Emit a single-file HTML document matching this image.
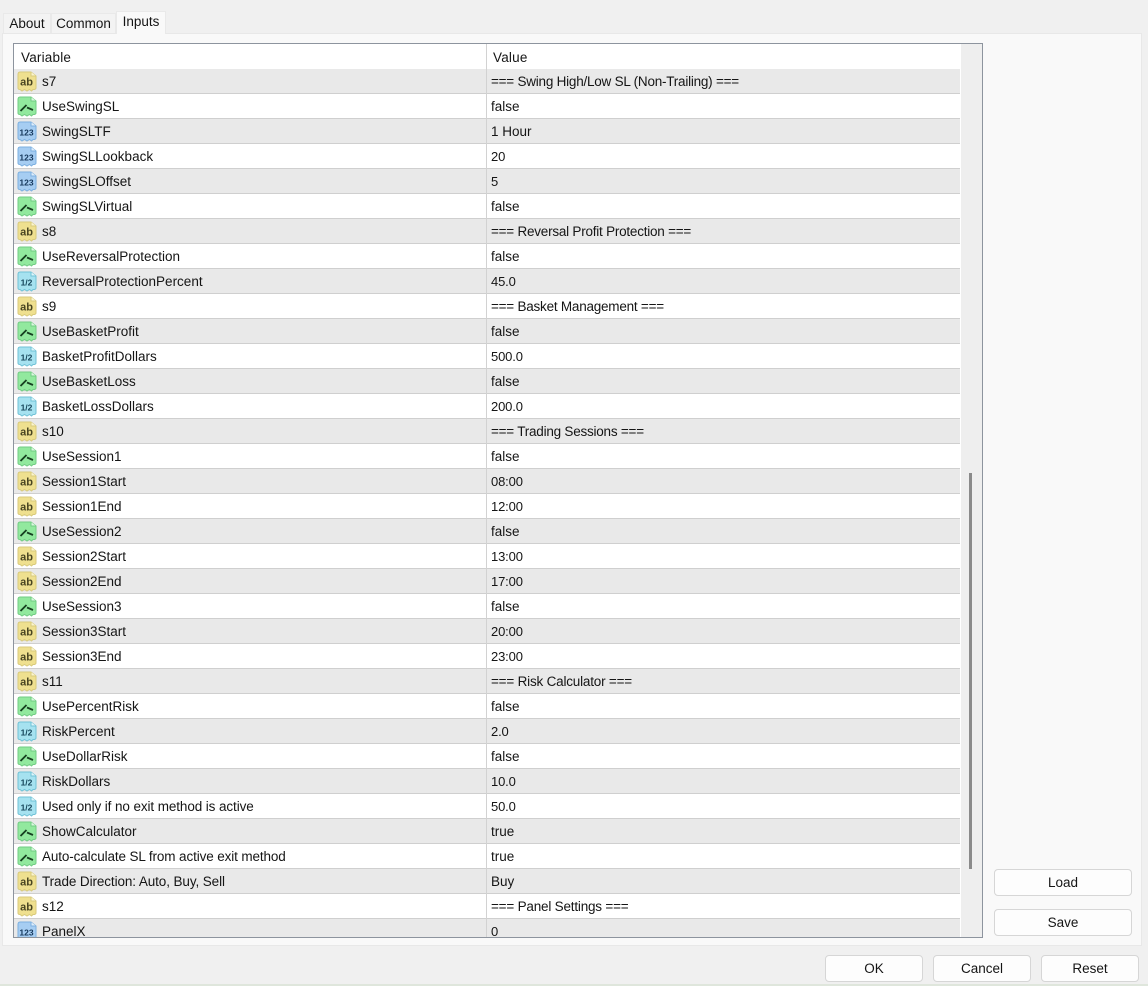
<!DOCTYPE html>
<html><head><meta charset="utf-8"><style>
html,body{margin:0;padding:0;width:1148px;height:986px;overflow:hidden;background:#f0f0f0;font-family:"Liberation Sans",sans-serif;font-size:13.5px;color:#151515}
.a{position:absolute;box-sizing:border-box}
.tab{position:absolute;box-sizing:border-box;text-align:center;background:#f3f3f3;border:1px solid #e9e9e9;border-bottom:0;height:20px;top:13px;line-height:20px}
#panel{left:2px;top:33px;width:1140px;height:913px;background:#f9f9f9;border:1px solid #e8e8e8}
#list{left:13px;top:43px;width:970px;height:895px;background:#fff;border:1px solid #8d949e;overflow:hidden}
#sb{position:absolute;left:947px;top:0;width:21px;height:893px;background:#eeeeee}
#th{position:absolute;left:955px;top:429px;width:3px;height:396px;background:#8a8a8a}
.h{position:absolute;top:6px;line-height:15px;letter-spacing:.2px}
.r{position:absolute;left:0;width:946px;height:25px;background:#fff;border-bottom:1px solid #cfcfcf;box-sizing:border-box}
.g{background:#e9e9e9}
.r svg{position:absolute;left:2px;top:2px;width:21px;height:21px;filter:blur(.3px)}
.r svg text{font-family:"Liberation Sans",sans-serif;font-weight:700;fill:#4a4622;text-anchor:middle}
.t1{font-size:11px}
.t2{font-size:8.500px;fill:#16385c!important}
.t3{font-size:8.500px;fill:#16465a!important}
.n{position:absolute;left:28px;top:5px;line-height:16px;white-space:nowrap}
.v{position:absolute;left:477px;top:5px;line-height:16px;white-space:nowrap}
.s{letter-spacing:-.23px}
.d{font-size:13px;letter-spacing:-.15px}
#col{position:absolute;left:472px;top:0;width:1px;height:893px;background:#d2d2d2}
.b{position:absolute;box-sizing:border-box;background:#fdfdfd;border:1px solid #d6d6d6;border-radius:4px;text-align:center;line-height:26px;height:27px}
</style></head><body>
<svg width="0" height="0" style="position:absolute"><defs>
<symbol id="y" viewBox="0 0 21 21"><path d="M2 3.500Q2 1 4 1H15L20 5V17Q20 18 18.500 18.500L17 18.500 15.500 20 13.500 18.500 11 20 8.500 18.500 6 20 4 18.500Q2 18.500 2 17Z" fill="#efe08f" stroke="#d8ca7c"/><path d="M15 1V5H20" fill="#fbf6d0" stroke="#d8ca7c"/></symbol>
<symbol id="e" viewBox="0 0 21 21"><path d="M2 3.500Q2 1 4 1H15L20 5V17Q20 18 18.500 18.500L17 18.500 15.500 20 13.500 18.500 11 20 8.500 18.500 6 20 4 18.500Q2 18.500 2 17Z" fill="#92e99e" stroke="#72cc84"/><path d="M15 1V5H20" fill="#dcf8e0" stroke="#72cc84"/><path d="M4.500 15L10.500 9M11 11.500L17 14" fill="none" stroke="#173f20" stroke-width="1.800"/></symbol>
<symbol id="u" viewBox="0 0 21 21"><path d="M2 3.500Q2 1 4 1H15L20 5V17Q20 18 18.500 18.500L17 18.500 15.500 20 13.500 18.500 11 20 8.500 18.500 6 20 4 18.500Q2 18.500 2 17Z" fill="#a6cdf2" stroke="#7cb0e0"/><path d="M15 1V5H20" fill="#e0eefb" stroke="#7cb0e0"/></symbol>
<symbol id="c" viewBox="0 0 21 21"><path d="M2 3.500Q2 1 4 1H15L20 5V17Q20 18 18.500 18.500L17 18.500 15.500 20 13.500 18.500 11 20 8.500 18.500 6 20 4 18.500Q2 18.500 2 17Z" fill="#a6e2f0" stroke="#70c2d6"/><path d="M15 1V5H20" fill="#e0f6fb" stroke="#70c2d6"/></symbol>
</defs></svg>

<div class="a" id="panel"></div>
<div class="tab" style="left:3px;width:48px">About</div>
<div class="tab" style="left:51px;width:65px">Common</div>
<div class="tab" style="left:116px;width:50px;top:11px;height:23px;background:#f9f9f9;line-height:20px;z-index:2">Inputs</div>

<div class="a" id="list">
<div class="h" style="left:7px">Variable</div><div class="h" style="left:479px">Value</div>

<div class="r g" style="top:25px"><svg><use href="#y"/><text class="t1" x="10.500" y="14.500">ab</text></svg><span class="n">s7</span><span class="v s">=== Swing High/Low SL (Non-Trailing) ===</span></div>
<div class="r" style="top:50px"><svg><use href="#e"/></svg><span class="n">UseSwingSL</span><span class="v">false</span></div>
<div class="r g" style="top:75px"><svg><use href="#u"/><text class="t2" x="10.500" y="14.500">123</text></svg><span class="n">SwingSLTF</span><span class="v">1 Hour</span></div>
<div class="r" style="top:100px"><svg><use href="#u"/><text class="t2" x="10.500" y="14.500">123</text></svg><span class="n">SwingSLLookback</span><span class="v d">20</span></div>
<div class="r g" style="top:125px"><svg><use href="#u"/><text class="t2" x="10.500" y="14.500">123</text></svg><span class="n">SwingSLOffset</span><span class="v d">5</span></div>
<div class="r" style="top:150px"><svg><use href="#e"/></svg><span class="n">SwingSLVirtual</span><span class="v">false</span></div>
<div class="r g" style="top:175px"><svg><use href="#y"/><text class="t1" x="10.500" y="14.500">ab</text></svg><span class="n">s8</span><span class="v s">=== Reversal Profit Protection ===</span></div>
<div class="r" style="top:200px"><svg><use href="#e"/></svg><span class="n">UseReversalProtection</span><span class="v">false</span></div>
<div class="r g" style="top:225px"><svg><use href="#c"/><text class="t3" x="10.500" y="14.500">1/2</text></svg><span class="n">ReversalProtectionPercent</span><span class="v d">45.0</span></div>
<div class="r" style="top:250px"><svg><use href="#y"/><text class="t1" x="10.500" y="14.500">ab</text></svg><span class="n">s9</span><span class="v s">=== Basket Management ===</span></div>
<div class="r g" style="top:275px"><svg><use href="#e"/></svg><span class="n">UseBasketProfit</span><span class="v">false</span></div>
<div class="r" style="top:300px"><svg><use href="#c"/><text class="t3" x="10.500" y="14.500">1/2</text></svg><span class="n">BasketProfitDollars</span><span class="v d">500.0</span></div>
<div class="r g" style="top:325px"><svg><use href="#e"/></svg><span class="n">UseBasketLoss</span><span class="v">false</span></div>
<div class="r" style="top:350px"><svg><use href="#c"/><text class="t3" x="10.500" y="14.500">1/2</text></svg><span class="n">BasketLossDollars</span><span class="v d">200.0</span></div>
<div class="r g" style="top:375px"><svg><use href="#y"/><text class="t1" x="10.500" y="14.500">ab</text></svg><span class="n">s10</span><span class="v s">=== Trading Sessions ===</span></div>
<div class="r" style="top:400px"><svg><use href="#e"/></svg><span class="n">UseSession1</span><span class="v">false</span></div>
<div class="r g" style="top:425px"><svg><use href="#y"/><text class="t1" x="10.500" y="14.500">ab</text></svg><span class="n">Session1Start</span><span class="v d">08:00</span></div>
<div class="r" style="top:450px"><svg><use href="#y"/><text class="t1" x="10.500" y="14.500">ab</text></svg><span class="n">Session1End</span><span class="v d">12:00</span></div>
<div class="r g" style="top:475px"><svg><use href="#e"/></svg><span class="n">UseSession2</span><span class="v">false</span></div>
<div class="r" style="top:500px"><svg><use href="#y"/><text class="t1" x="10.500" y="14.500">ab</text></svg><span class="n">Session2Start</span><span class="v d">13:00</span></div>
<div class="r g" style="top:525px"><svg><use href="#y"/><text class="t1" x="10.500" y="14.500">ab</text></svg><span class="n">Session2End</span><span class="v d">17:00</span></div>
<div class="r" style="top:550px"><svg><use href="#e"/></svg><span class="n">UseSession3</span><span class="v">false</span></div>
<div class="r g" style="top:575px"><svg><use href="#y"/><text class="t1" x="10.500" y="14.500">ab</text></svg><span class="n">Session3Start</span><span class="v d">20:00</span></div>
<div class="r" style="top:600px"><svg><use href="#y"/><text class="t1" x="10.500" y="14.500">ab</text></svg><span class="n">Session3End</span><span class="v d">23:00</span></div>
<div class="r g" style="top:625px"><svg><use href="#y"/><text class="t1" x="10.500" y="14.500">ab</text></svg><span class="n">s11</span><span class="v s" style="letter-spacing:-.2px">=== Risk Calculator ===</span></div>
<div class="r" style="top:650px"><svg><use href="#e"/></svg><span class="n">UsePercentRisk</span><span class="v">false</span></div>
<div class="r g" style="top:675px"><svg><use href="#c"/><text class="t3" x="10.500" y="14.500">1/2</text></svg><span class="n">RiskPercent</span><span class="v d">2.0</span></div>
<div class="r" style="top:700px"><svg><use href="#e"/></svg><span class="n">UseDollarRisk</span><span class="v">false</span></div>
<div class="r g" style="top:725px"><svg><use href="#c"/><text class="t3" x="10.500" y="14.500">1/2</text></svg><span class="n">RiskDollars</span><span class="v d">10.0</span></div>
<div class="r" style="top:750px"><svg><use href="#c"/><text class="t3" x="10.500" y="14.500">1/2</text></svg><span class="n" style="letter-spacing:-.1px">Used only if no exit method is active</span><span class="v d">50.0</span></div>
<div class="r g" style="top:775px"><svg><use href="#e"/></svg><span class="n">ShowCalculator</span><span class="v">true</span></div>
<div class="r" style="top:800px"><svg><use href="#e"/></svg><span class="n" style="letter-spacing:-.12px">Auto-calculate SL from active exit method</span><span class="v">true</span></div>
<div class="r g" style="top:825px"><svg><use href="#y"/><text class="t1" x="10.500" y="14.500">ab</text></svg><span class="n" style="letter-spacing:-.1px">Trade Direction: Auto, Buy, Sell</span><span class="v">Buy</span></div>
<div class="r" style="top:850px"><svg><use href="#y"/><text class="t1" x="10.500" y="14.500">ab</text></svg><span class="n">s12</span><span class="v s" style="letter-spacing:-.2px">=== Panel Settings ===</span></div>
<div class="r g" style="top:875px"><svg><use href="#u"/><text class="t2" x="10.500" y="14.500">123</text></svg><span class="n">PanelX</span><span class="v d">0</span></div>

<div id="col"></div>
<div id="sb"></div><div id="th"></div>
</div>

<div class="b" style="left:994px;top:869px;width:138px">Load</div>
<div class="b" style="left:994px;top:909px;width:138px">Save</div>
<div class="b" style="left:825px;top:955px;width:98px">OK</div>
<div class="b" style="left:933px;top:955px;width:98px">Cancel</div>
<div class="b" style="left:1041px;top:955px;width:98px">Reset</div>
<div class="a" style="left:0;top:984px;width:1148px;height:2px;background:#dfe6dc"></div>
</body></html>
